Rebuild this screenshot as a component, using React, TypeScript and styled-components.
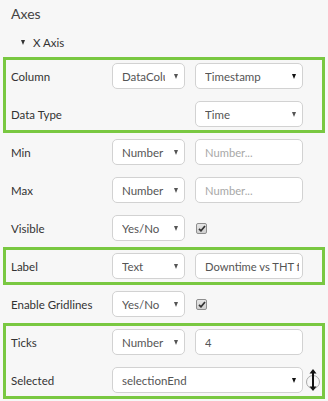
import React from "react";
import styled, { createGlobalStyle } from "styled-components";

const GlobalStyle = createGlobalStyle`
  body {
    margin: 0;
    background: #f7f7f7;
    font-family: Lato, "Open Sans", sans-serif;
    color: #333;
  }
`;

const Panel = styled.div`
  width: 322px;
  padding: 0 3px;
`;

const Title = styled.div`
  height: 27px;
  line-height: 27px;
  padding-left: 8px;
  font-size: 14px;
  color: #444;
`;

const SubTitle = styled.div`
  height: 30px;
  display: flex;
  align-items: center;
  padding-left: 18px;
  gap: 8px;
  font-size: 11.5px;
  color: #333;
`;

const Caret = styled.span<{ $color?: string; $size?: number }>`
  width: 0;
  height: 0;
  flex: none;
  border-left: ${(p) => (p.$size || 5) / 2}px solid transparent;
  border-right: ${(p) => (p.$size || 5) / 2}px solid transparent;
  border-top: ${(p) => p.$size || 5}px solid ${(p) => p.$color || "#333"};
`;

const Group = styled.div`
  outline: 3px solid #79c841;
  outline-offset: -3px;
`;

const Row = styled.div`
  height: 38px;
  display: flex;
  align-items: center;
  padding-left: 8px;
`;

const Label = styled.div`
  width: 101px;
  flex: none;
  font-size: 11.5px;
  color: #333;
`;

const Box = styled.div<{ $width: number; $tight?: boolean }>`
  width: ${(p) => p.$width}px;
  height: 26px;
  box-sizing: border-box;
  flex: none;
  display: flex;
  align-items: center;
  background: #fff;
  border: 1px solid #d2d2d2;
  border-radius: 5px;
  padding: 0 ${(p) => (p.$tight ? 3 : 6)}px 0 9px;
  font-size: ${(p) => (p.$tight ? 11.2 : 11.5)}px;
  color: #555;
  & + & {
    margin-left: 10px;
  }
`;

const BoxText = styled.span<{ $muted?: boolean; $gap?: number }>`
  flex: 1;
  overflow: hidden;
  white-space: nowrap;
  margin-right: ${(p) => p.$gap || 0}px;
  color: ${(p) => (p.$muted ? "#a8a8a8" : "#555")};
`;

const Spacer = styled.div`
  width: 83px;
  flex: none;
`;

const Check = styled.div`
  width: 11px;
  height: 11px;
  margin-left: 11px;
  box-sizing: border-box;
  border: 1px solid #8e8e8e;
  border-radius: 2px;
  background: linear-gradient(#e6e6e6, #cfcfcf);
  display: flex;
  align-items: center;
  justify-content: center;
`;

const IconSlot = styled.div`
  margin-left: 2px;
  display: flex;
  align-items: center;
`;

const Select = ({ width, text, dark }: { width: number; text: string; dark?: boolean }) => (
  <Box $width={width}>
    <BoxText $gap={9}>{text}</BoxText>
    <Caret $color={dark ? "#111" : "#555"} />
  </Box>
);

const Field = ({ value, placeholder }: { value?: string; placeholder?: string }) => (
  <Box $width={108} $tight>
    <BoxText $muted={!value}>{value || placeholder}</BoxText>
  </Box>
);

const CheckMark = () => (
  <Check>
    <svg width="8" height="7" viewBox="0 0 8 7">
      <path d="M1 3.8 L3 5.8 L7 1" fill="none" stroke="#333" strokeWidth="1.7" />
    </svg>
  </Check>
);

const ResizeIcon = () => (
  <IconSlot>
    <svg width="16" height="26" viewBox="0 0 16 26">
      <circle cx="8" cy="15" r="6.5" fill="none" stroke="#aaa" strokeWidth="1" />
      <path d="M8 4 V22" stroke="#111" strokeWidth="2" />
      <path d="M4.5 6.5 L8 2 L11.5 6.5 Z" fill="#111" />
      <path d="M4.5 19.5 L8 24 L11.5 19.5 Z" fill="#111" />
    </svg>
  </IconSlot>
);

export default function App() {
  return (
    <>
      <GlobalStyle />
      <Panel>
        <Title>Axes</Title>
        <SubTitle>
          <Caret $color="#333" $size={5} />
          X Axis
        </SubTitle>
        <Group>
          <Row>
            <Label>Column</Label>
            <Select width={73} text="DataColumn" />
            <Select width={108} text="Timestamp" dark />
          </Row>
          <Row>
            <Label>Data Type</Label>
            <Spacer />
            <Select width={108} text="Time" />
          </Row>
        </Group>
        <Row>
          <Label>Min</Label>
          <Select width={73} text="Number" />
          <Field placeholder="Number..." />
        </Row>
        <Row>
          <Label>Max</Label>
          <Select width={73} text="Number" />
          <Field placeholder="Number..." />
        </Row>
        <Row>
          <Label>Visible</Label>
          <Select width={73} text="Yes/No" />
          <CheckMark />
        </Row>
        <Group>
          <Row>
            <Label>Label</Label>
            <Select width={73} text="Text" />
            <Field value="Downtime vs THT for Line" />
          </Row>
        </Group>
        <Row>
          <Label>Enable Gridlines</Label>
          <Select width={73} text="Yes/No" />
          <CheckMark />
        </Row>
        <Group>
          <Row>
            <Label>Ticks</Label>
            <Select width={73} text="Number" />
            <Field value="4" />
          </Row>
          <Row>
            <Label>Selected</Label>
            <Select width={191} text="selectionEnd" dark />
            <ResizeIcon />
          </Row>
        </Group>
      </Panel>
    </>
  );
}
